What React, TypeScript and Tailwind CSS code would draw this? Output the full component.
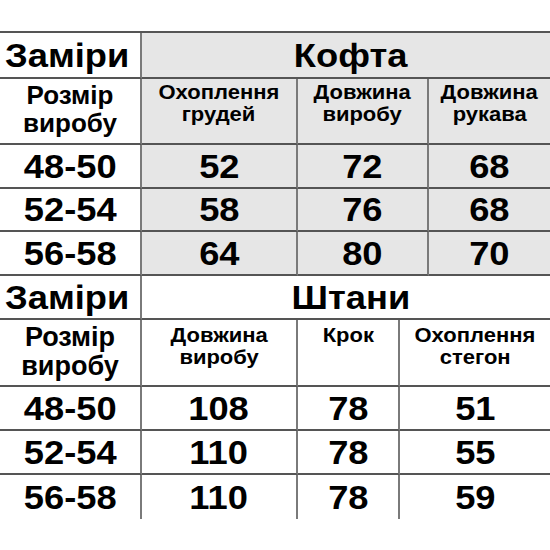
const top = [
  ['48-50', '52', '72', '68'],
  ['52-54', '58', '76', '68'],
  ['56-58', '64', '80', '70'],
];

const bottom = [
  ['48-50', '108', '78', '51'],
  ['52-54', '110', '78', '55'],
  ['56-58', '110', '78', '59'],
];

const hLine = 'border-b-2 border-[#555]';
const vLine = 'border-r-2 border-r-[#7a7a7a]';
const wide = 'inline-block scale-x-[1.1]';

const App = () => {
  return (
    <div className="w-[550px] h-[550px] bg-white pt-[31px] text-black font-['Liberation_Sans',Arial,sans-serif] font-bold">
      {/* Кофта */}
      <div className="grid grid-cols-[142px_156px_131px_121px] grid-rows-[46px_66px_44px_43px_44px] border-t-2 border-[#555]">
        <div className={`${hLine} ${vLine} flex items-center pl-[5px] text-[33px] leading-none`}>
          <span className={`${wide} origin-left`}>Заміри</span>
        </div>
        <div className={`${hLine} col-span-3 bg-[#e6e6e6] flex items-center justify-center pl-[10px] text-[33px] leading-none`}>
          <span className={wide}>Кофта</span>
        </div>

        <div className={`${hLine} ${vLine} flex flex-col items-center pt-[2px] text-[26px] leading-[28px]`}>
          <span>Розмір</span>
          <span>виробу</span>
        </div>
        <div className={`${hLine} ${vLine} bg-[#e6e6e6] flex flex-col items-center pt-[2px] text-[20px] leading-[22px]`}>
          <span className={wide}>Охоплення</span>
          <span className={wide}>грудей</span>
        </div>
        <div className={`${hLine} ${vLine} bg-[#e6e6e6] flex flex-col items-center pt-[2px] text-[20px] leading-[22px]`}>
          <span className={wide}>Довжина</span>
          <span className={wide}>виробу</span>
        </div>
        <div className={`${hLine} bg-[#e6e6e6] flex flex-col items-center pt-[2px] text-[20px] leading-[22px]`}>
          <span className={wide}>Довжина</span>
          <span className={wide}>рукава</span>
        </div>

        {top.map((row) =>
          row.map((v, i) => (
            <div
              key={row[0] + i}
              className={`${hLine} ${i < 3 ? vLine : ''} ${i > 0 ? 'bg-[#e6e6e6]' : ''} flex items-center justify-center text-[33px] leading-none`}
            >
              <span className={wide}>{v}</span>
            </div>
          ))
        )}
      </div>

      {/* Штани */}
      <div className="grid grid-cols-[142px_156px_102px_150px] grid-rows-[44px_67px_44px_44px_44px]">
        <div className={`${hLine} ${vLine} flex items-center pl-[5px] text-[33px] leading-none`}>
          <span className={`${wide} origin-left`}>Заміри</span>
        </div>
        <div className={`${hLine} col-span-3 flex items-center justify-center pl-[10px] text-[33px] leading-none`}>
          <span className={wide}>Штани</span>
        </div>

        <div className={`${hLine} ${vLine} flex flex-col items-center pt-[3px] text-[27px] leading-[29px]`}>
          <span>Розмір</span>
          <span>виробу</span>
        </div>
        <div className={`${hLine} ${vLine} flex flex-col items-center pt-[4px] text-[20px] leading-[22px]`}>
          <span className={wide}>Довжина</span>
          <span className={wide}>виробу</span>
        </div>
        <div className={`${hLine} ${vLine} flex flex-col items-center pt-[4px] text-[20px] leading-[22px]`}>
          <span className={wide}>Крок</span>
        </div>
        <div className={`${hLine} flex flex-col items-center pt-[4px] text-[20px] leading-[22px]`}>
          <span className={wide}>Охоплення</span>
          <span className={wide}>стегон</span>
        </div>

        {bottom.map((row, r) =>
          row.map((v, i) => (
            <div
              key={row[0] + r + i}
              className={`${r < 2 ? hLine : ''} ${i < 3 ? vLine : ''} flex items-center justify-center text-[33px] leading-none`}
            >
              <span className={wide}>{v}</span>
            </div>
          ))
        )}
      </div>
    </div>
  );
};

export default App;
